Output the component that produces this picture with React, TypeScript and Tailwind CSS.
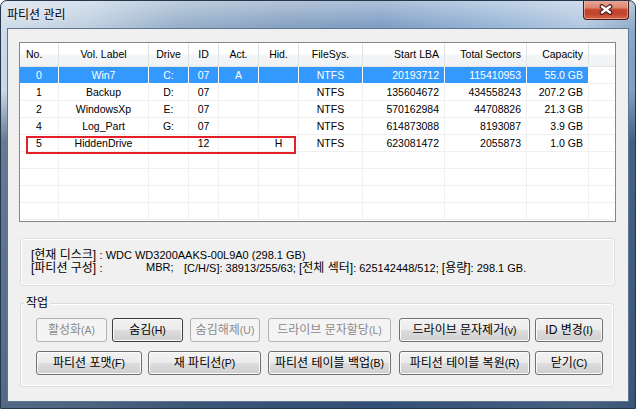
import type { ReactNode } from 'react'

type Col = { w: string; head: string; headCls: string; cellCls: string; key: keyof Row }

type Row = {
  no: string
  label: string
  drive: string
  id: string
  act: string
  hid: string
  fs: string
  lba: string
  total: string
  cap: string
  sel?: boolean
}

const cols: Col[] = [
  { w: 'w-[39px]', head: 'No.', headCls: 'text-left pl-[6px]', cellCls: 'text-center', key: 'no' },
  { w: 'w-[90px]', head: 'Vol. Label', headCls: 'text-center', cellCls: 'text-center', key: 'label' },
  { w: 'w-[40px]', head: 'Drive', headCls: 'text-center', cellCls: 'text-center', key: 'drive' },
  { w: 'w-[30px]', head: 'ID', headCls: 'text-center', cellCls: 'text-center', key: 'id' },
  { w: 'w-[40px]', head: 'Act.', headCls: 'text-center', cellCls: 'text-center', key: 'act' },
  { w: 'w-[40px]', head: 'Hid.', headCls: 'text-center', cellCls: 'text-center', key: 'hid' },
  { w: 'w-[64px]', head: 'FileSys.', headCls: 'text-center', cellCls: 'text-center', key: 'fs' },
  { w: 'w-[82px]', head: 'Start LBA', headCls: 'text-right pr-[5px]', cellCls: 'text-right pr-[5px]', key: 'lba' },
  { w: 'w-[82px]', head: 'Total Sectors', headCls: 'text-right pr-[5px]', cellCls: 'text-right pr-[5px]', key: 'total' },
  { w: 'w-[62px]', head: 'Capacity', headCls: 'text-right pr-[5px]', cellCls: 'text-right pr-[5px]', key: 'cap' },
]

const rows: Row[] = [
  { no: '0', label: 'Win7', drive: 'C:', id: '07', act: 'A', hid: '', fs: 'NTFS', lba: '20193712', total: '115410953', cap: '55.0 GB', sel: true },
  { no: '1', label: 'Backup', drive: 'D:', id: '07', act: '', hid: '', fs: 'NTFS', lba: '135604672', total: '434558243', cap: '207.2 GB' },
  { no: '2', label: 'WindowsXp', drive: 'E:', id: '07', act: '', hid: '', fs: 'NTFS', lba: '570162984', total: '44708826', cap: '21.3 GB' },
  { no: '4', label: 'Log_Part', drive: 'G:', id: '07', act: '', hid: '', fs: 'NTFS', lba: '614873088', total: '8193087', cap: '3.9 GB' },
  { no: '5', label: 'HiddenDrive', drive: '', id: '12', act: '', hid: 'H', fs: 'NTFS', lba: '623081472', total: '2055873', cap: '1.0 GB' },
]

const EMPTY_ROWS = 4

// 한글은 12px, 영문/숫자는 조금 작게
function K({ children }: { children: ReactNode }) {
  return <span className="text-[12px] leading-[12px] whitespace-pre">{children}</span>
}

function L({ children }: { children: ReactNode }) {
  return <span className="text-[11px] leading-[12px] whitespace-pre">{children}</span>
}

function Btn({ cls, label, k, disabled, def }: { cls: string; label: string; k: string; disabled?: boolean; def?: boolean }) {
  const base = 'flex h-[24px] shrink-0 items-center justify-center whitespace-nowrap rounded-[3px] border'
  const look = disabled
    ? 'border-[#adb2b5] bg-[#f4f4f4] text-[#8a8a8a]'
    : def
      ? 'border-[#3c3c3c] bg-[linear-gradient(to_bottom,#f2f2f2_0%,#ebebeb_50%,#dddddd_50%,#cfcfcf_100%)] text-black shadow-[inset_0_0_0_1px_#fbfbfb]'
      : 'border-[#707070] bg-[linear-gradient(to_bottom,#f2f2f2_0%,#ebebeb_50%,#dddddd_50%,#cfcfcf_100%)] text-black shadow-[inset_0_0_0_1px_#fbfbfb]'
  return (
    <div className={`${base} ${look} ${cls}`}>
      <span className="text-[12px] leading-[14px]">{label}</span>
      <span className="text-[10.5px] leading-[14px]">({k})</span>
    </div>
  )
}

function ListView() {
  return (
    <div className="relative ml-[11px] mt-[13px] h-[180px] w-[597px] overflow-hidden border border-[#828790] bg-white">
      {/* header */}
      <div className="flex h-[24px] border-b border-[#e5e5e5] bg-[linear-gradient(to_bottom,#ffffff_0%,#ffffff_45%,#f4f5f7_55%,#f1f2f4_100%)]">
        {cols.map((c) => (
          <div key={c.head} className={`${c.w} ${c.headCls} shrink-0 border-r border-[#e3e4e6] leading-[23px] whitespace-nowrap`}>
            {c.head}
          </div>
        ))}
        <div className="flex-1" />
      </div>
      {/* rows */}
      {rows.map((r) => (
        <div key={r.no} className="flex h-[17px]">
          {cols.map((c) => (
            <div
              key={c.key}
              className={`${c.w} ${c.cellCls} shrink-0 border-b border-r leading-[16px] whitespace-nowrap ${
                r.sel ? 'border-white bg-[#3399ff] text-white' : 'border-[#f0f0f0] text-black'
              }`}
            >
              {r[c.key] as string}
            </div>
          ))}
          <div className="flex-1 border-b border-[#f0f0f0]" />
        </div>
      ))}
      {Array.from({ length: EMPTY_ROWS }).map((_, i) => (
        <div key={i} className="flex h-[17px]">
          {cols.map((c) => (
            <div key={c.key} className={`${c.w} shrink-0 border-b border-r border-[#f0f0f0]`} />
          ))}
          <div className="flex-1 border-b border-[#f0f0f0]" />
        </div>
      ))}
      {/* 숨김 파티션 표시 */}
      <div className="absolute left-[6px] top-[93px] h-[18px] w-[270px] border-2 border-[#e3202a]" />
    </div>
  )
}

export default function App() {
  return (
    <div className="relative flex h-[409px] w-[636px] flex-col overflow-hidden rounded-t-[7px] border border-[#25374b] bg-[linear-gradient(to_bottom,rgba(255,255,255,0.45)_0px,rgba(255,255,255,0.1)_28px,rgba(255,255,255,0)_60px),linear-gradient(to_bottom,rgba(20,45,80,0)_90px,rgba(20,45,80,0.55)_140px,rgba(20,45,80,0.65)_409px),linear-gradient(to_right,#cad8e7_0%,#b6c8dc_14%,#88a4c2_28%,#7594b9_45%,#6b8fbb_60%,#89abd1_78%,#a9c1dc_92%,#7f9ec2_100%)] font-['Liberation_Sans','Noto_Sans_CJK_KR',sans-serif] text-[10.5px] text-black">
      {/* title bar */}
      <div className="flex h-[27px] shrink-0 items-start">
        <div className="ml-[6px] self-center text-[12px] leading-[14px] text-black [text-shadow:0_0_6px_rgba(255,255,255,0.9)]">
          파티션 관리
        </div>
        <div className="ml-auto mr-[6px] mt-[-1px] flex h-[20px] w-[46px] items-center justify-center rounded-b-[4px] border border-t-0 border-[#4b1d16] bg-[linear-gradient(to_bottom,#e9aa9b_0%,#dd8671_40%,#c6442d_52%,#c2452e_75%,#d7674b_100%)] shadow-[inset_0_0_0_1px_rgba(255,220,210,0.45)]">
          <svg width="14" height="11" viewBox="0 0 14 11">
            <path d="M3 2.5 L11 8.5 M11 2.5 L3 8.5" stroke="#3b1510" strokeWidth="4.6" strokeLinecap="round" fill="none" />
            <path d="M3 2.5 L11 8.5 M11 2.5 L3 8.5" stroke="#ffffff" strokeWidth="2.6" strokeLinecap="round" fill="none" />
          </svg>
        </div>
      </div>

      {/* client area */}
      <div className="mx-[6px] mb-[6px] flex flex-1 flex-col border border-[#5d7590] bg-[#f0f0f0]">
        <ListView />

        {/* disk info */}
        <div className="ml-[12px] mt-[16px] h-[48px] w-[595px] rounded-[3px] border border-[#d5dfe5] pl-[10px] pt-[10px] shadow-[inset_0_0_0_1px_#ffffff]">
          <div className="flex h-[12px] items-center whitespace-nowrap">
            <K>[현재 디스크] </K>
            <L>: WDC WD3200AAKS-00L9A0 (298.1 GB)</L>
          </div>
          <div className="mt-[1px] flex h-[12px] items-center whitespace-nowrap">
            <span className="flex w-[115px] shrink-0 items-center">
              <K>[파티션 구성] </K>
              <L>:</L>
            </span>
            <span className="w-[38px] shrink-0">
              <L>MBR;</L>
            </span>
            <L>[C/H/S]: 38913/255/63; </L>
            <K>[전체 섹터]</K>
            <L>: 625142448/512; </L>
            <K>[용량]</K>
            <L>: 298.1 GB.</L>
          </div>
        </div>

        {/* 작업 */}
        <div className="ml-[12px] mt-[17px] h-[84px] w-[594px] rounded-[3px] border border-[#d5dfe5] shadow-[inset_0_0_0_1px_#ffffff]">
          <div className="-mt-[8px] ml-[3px] w-fit bg-[#f0f0f0] px-[2px] text-[12px] leading-[14px]">작업</div>
          <div className="mt-[8px] flex">
            <Btn cls="ml-[15px] w-[71px]" label="활성화" k="A" disabled />
            <Btn cls="ml-[5px] w-[71px]" label="숨김" k="H" def />
            <Btn cls="ml-[7px] w-[70px]" label="숨김해제" k="U" disabled />
            <Btn cls="ml-[8px] w-[123px]" label="드라이브 문자할당" k="L" disabled />
            <Btn cls="ml-[8px] w-[131px]" label="드라이브 문자제거" k="v" />
            <Btn cls="ml-[5px] w-[68px]" label="ID 변경" k="I" />
          </div>
          <div className="mt-[9px] flex">
            <Btn cls="ml-[15px] w-[106px]" label="파티션 포맷" k="F" />
            <Btn cls="ml-[6px] w-[113px]" label="재 파티션" k="P" />
            <Btn cls="ml-[7px] w-[123px]" label="파티션 테이블 백업" k="B" />
            <Btn cls="ml-[8px] w-[131px]" label="파티션 테이블 복원" k="R" />
            <Btn cls="ml-[5px] w-[68px]" label="닫기" k="C" />
          </div>
        </div>
      </div>
    </div>
  )
}
